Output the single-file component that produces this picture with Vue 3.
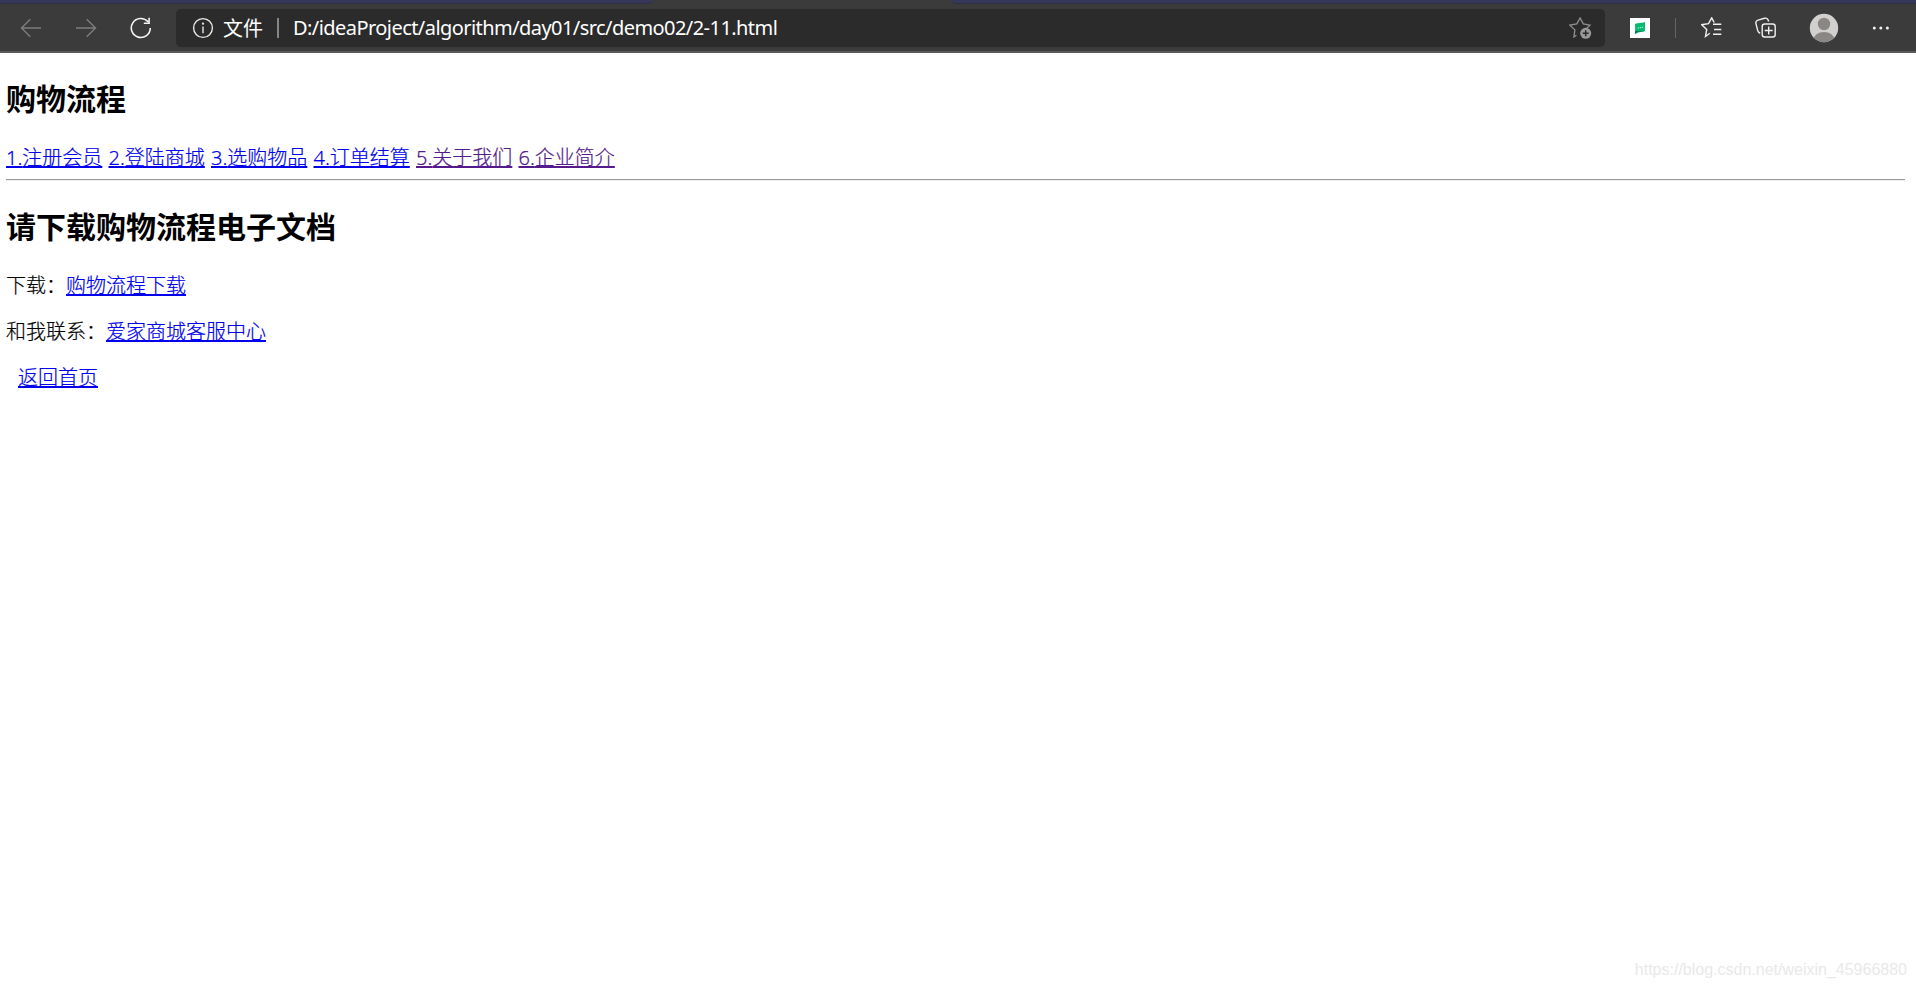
<script setup>
const links = [
  { n: '1.', t: '注册会员' },
  { n: '2.', t: '登陆商城' },
  { n: '3.', t: '选购物品' },
  { n: '4.', t: '订单结算' },
  { n: '5.', t: '关于我们', visited: true },
  { n: '6.', t: '企业简介', visited: true }
]
</script>

<template>
  <div class="window">
    <header class="chrome">
      <div class="tabs"><i class="tab-left"></i><i class="tab-right"></i></div>
      <div class="toolbar">
        <svg class="nav back" width="22" height="20" viewBox="0 0 22 20"><path d="M21 10H1.5M10.3 1.2L1.5 10l8.8 8.8" /></svg>
        <svg class="nav forward" width="22" height="20" viewBox="0 0 22 20"><path d="M1 10h19.5M11.7 1.2l8.8 8.8-8.8 8.8" /></svg>
        <svg class="reload" width="22" height="22" viewBox="0 0 22 22"><path d="M20.3 11A9.5 9.5 0 1 1 18 4.8M19.1 .8v5.4h-5.3" /></svg>
        <div class="address">
          <svg class="info" width="22" height="22" viewBox="0 0 22 22"><circle cx="11" cy="11" r="9.4" /><path d="M11 9.5v6.7" /><circle class="dot" cx="11" cy="6.7" r="1.1" /></svg>
          <span class="scheme">文件</span>
          <i class="bar"></i>
          <span class="url">D:/ideaProject/algorithm/day01/src/demo02/2-11.html</span>
          <svg class="add-star" width="24" height="24" viewBox="0 0 24 24">
            <path d="M7.4 18.3L4.9 20l1-7.1-5-4.8 6.9-1.2L11.1 1l3.2 5.9 6.7 1.2-3.8 3.6" />
            <circle cx="16.7" cy="16.3" r="5.5" /><path class="plus" d="M16.7 13.3v6M13.7 16.3h6" />
          </svg>
        </div>
        <svg class="extension" width="20" height="20" viewBox="0 0 20 20"><rect width="20" height="20" fill="#fff" /><path d="M5 6.8q0-1 1-1.200l9-1.400v8.200q0 1-1 1.200l-6 1-2.700 1.600z" fill="#08b86f" /><path d="M5 12.500v3.200l3.200-1.600 6.500-1.200-7 .2z" fill="#087c58" /><path d="M7.800 10h1M9.800 9.700h1M11.800 9.400h1" stroke="#e8fff4" stroke-width="1" /></svg>
        <i class="separator"></i>
        <svg class="favorites" width="22" height="22" viewBox="0 0 22 22"><path d="M12 7.3h8.3M13 12.500h7.300M12 17.300h8.300M8.800 16.300L4.500 19.500l1.200-7.100-5-4.700 6.800-1 3.200-5.900 2.500 4.700" /></svg>
        <svg class="collections" width="22" height="22" viewBox="0 0 22 22"><rect x="7.200" y="7" width="13" height="13" rx="2.500" /><path d="M13.700 9.500v8M9.700 13.500h8M5.200 16.200C3.700 15.800 3.200 15 2.700 13.500L1 6.800C.5 4.800 1.200 3.600 3 3.100L9.600 1.300c2-.5 3.100.2 3.700 2l.3 1.200" /></svg>
        <svg class="avatar" width="30" height="30" viewBox="0 0 30 30"><defs><clipPath id="round"><circle cx="15" cy="15" r="14.200" /></clipPath></defs><circle cx="15" cy="15" r="14.200" fill="#d2d0ce" /><g clip-path="url(#round)" fill="#8a8785"><circle cx="15" cy="11" r="6.200" /><ellipse cx="15" cy="27" rx="10.500" ry="8" /></g></svg>
        <svg class="more" width="18" height="6" viewBox="0 0 18 6"><circle cx="2.300" cy="3" r="1.500" /><circle cx="8.800" cy="3" r="1.500" /><circle cx="15.400" cy="3" r="1.500" /></svg>
      </div>
    </header>
    <main class="page">
      <h2>购物流程</h2>
      <nav class="links">
        <a v-for="l in links" :key="l.n" :class="{ visited: l.visited }"><span class="num">{{ l.n }}</span>{{ l.t }}</a>
      </nav>
      <hr />
      <h2 class="second">请下载购物流程电子文档</h2>
      <p>下载：<a>购物流程下载</a></p>
      <p>和我联系：<a>爱家商城客服中心</a></p>
      <p class="home"><a>返回首页</a></p>
    </main>
    <div class="watermark">https://blog.csdn.net/weixin_45966880</div>
  </div>
</template>

<style>
body { margin: 0; background: #fff; overflow: hidden; }
</style>

<style scoped>
.window { position: relative; width: 1916px; height: 988px; overflow: hidden; background: #fff; color: #000; font-family: "Noto Sans", "Noto Sans CJK SC", sans-serif; }
.chrome { box-sizing: border-box; height: 53px; background: #3b3b3b; border-bottom: 2px solid #5c5a5a; }
.tabs { display: flex; justify-content: space-between; height: 4px; }
.tabs i { box-sizing: border-box; height: 4px; background: #36375a; border-bottom: 1px solid #303044; }
.tab-left { width: 653px; border-bottom-right-radius: 4px; }
.tab-right { width: 964px; border-bottom-left-radius: 4px; }
.toolbar { display: flex; align-items: center; height: 47px; }
.toolbar svg { flex: none; fill: none; }
.nav { stroke: #7e7e7e; stroke-width: 1.4; }
.back { margin-left: 20px; }
.forward { margin-left: 33px; }
.reload { margin-left: 33px; stroke: #f4f4f4; stroke-width: 1.6; }
.address { box-sizing: border-box; display: flex; align-items: center; flex: none; width: 1429px; height: 38px; margin-left: 24px; padding: 0 12px 0 16px; border-radius: 5px; background: #2b2b2b; color: #fff; margin-top: 1px; }
.info { stroke: #e8e8e8; stroke-width: 1.4; }
.info .dot { fill: #eee; stroke: none; }
.scheme { margin-left: 9px; font: 20px/38px "Noto Sans CJK SC", sans-serif; }
.bar { width: 2px; height: 20px; margin: 0 14px 0 14px; background: #858585; }
.url { font: 20px/36px "Noto Sans", sans-serif; letter-spacing: -.56px; white-space: nowrap; }
.add-star { margin: 2px 0 0 auto; stroke: #8f8f8f; stroke-width: 1.3; }
.add-star circle { fill: #9a9a9a; stroke: none; }
.add-star .plus { stroke: #2b2b2b; stroke-width: 1.5; }
.extension { margin-left: 25px; }
.separator { width: 1px; height: 20px; margin-left: 25px; background: #656565; }
.favorites { margin-left: 25px; stroke: #f0f0f0; stroke-width: 1.4; }
.collections { margin-left: 32px; stroke: #f0f0f0; stroke-width: 1.4; }
.avatar { margin-left: 32px; }
.toolbar .more { margin-left: 33px; fill: #f2f2f2; }
.page { padding: 22px 11px 0 6px; font: 20px/26px "Noto Sans CJK SC", sans-serif; font-weight: 300; -webkit-text-stroke: .2px; }
h2 { margin: 0; font: bold 30px/44px "Noto Sans CJK SC", sans-serif; -webkit-text-stroke: 0; }
.links { display: flex; gap: 6px; margin-top: 25px; height: 26px; }
a { display: inline-block; color: #0000ee; text-decoration: underline 2px; text-decoration-skip-ink: none; text-underline-offset: 1px; white-space: nowrap; }
.links a { width: 96.5px; }
.num { font-family: "Noto Sans", sans-serif; }
a.visited { color: #551a8b; }
hr { height: 1px; margin: 9px 0 0; border: 0; background: #999; border-bottom: 1px solid #eee; }
.second { margin-top: 22px; }
p { margin: 0; height: 26px; white-space: nowrap; }
.second + p { margin-top: 25px; }
p + p { margin-top: 20px; }
.home { padding-left: 12px; }
.watermark { position: absolute; right: 9px; bottom: 8px; font: 16px/20px "Liberation Sans", sans-serif; color: #e9e9e9; }
</style>
